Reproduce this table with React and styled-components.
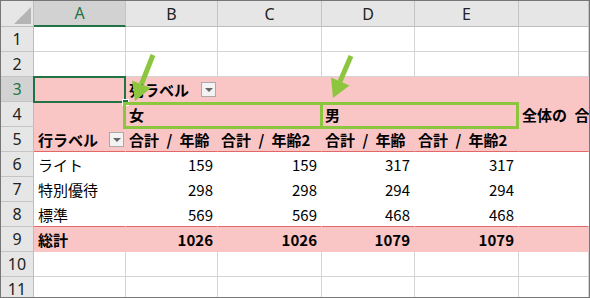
import React from 'react';
import styled, { createGlobalStyle } from 'styled-components';

const GlobalStyle = createGlobalStyle`
	html, body {
		margin: 0;
		padding: 0;
		background: #ffffff;
	}
`;

const PINK = '#f9c5c5';
const GRID = '#d4d4d4';
const XL_GREEN = '#217346';
const MARK = '#8cc63f';

const Frame = styled.div`
	position: relative;
	width: 590px;
	height: 298px;
	box-sizing: border-box;
	border: 1px solid #767676;
	overflow: hidden;
	background: #ffffff;
`;

const Sheet = styled.div`
	display: grid;
	grid-template-columns: 33px 92px 92px 104px 93px 104px 1fr;
	grid-template-rows: 26px repeat(11, 25px);
	font-family: 'Noto Sans CJK JP', 'Noto Sans', sans-serif;
	font-size: 15px;
	color: #000;
`;

const Corner = styled.div`
	position: relative;
	background: #e6e6e6;
	border-right: 1px solid #bdbdbd;
	border-bottom: 1px solid #bdbdbd;
	&::after {
		content: '';
		position: absolute;
		right: 2px;
		bottom: 2px;
		width: 0;
		height: 0;
		border-left: 17px solid transparent;
		border-bottom: 17px solid #b4b4b4;
	}
`;

const ColHead = styled.div`
	display: flex;
	align-items: center;
	justify-content: center;
	box-sizing: border-box;
	background: ${(p) => (p.$active ? '#d2d2d2' : '#e6e6e6')};
	color: ${(p) => (p.$active ? XL_GREEN : '#222')};
	border-right: 1px solid #c4c4c4;
	border-bottom: ${(p) => (p.$active ? `2px solid ${XL_GREEN}` : '1px solid #bdbdbd')};
	font-family: 'Noto Sans', sans-serif;
	font-size: 16px;
`;

const RowHead = styled.div`
	display: flex;
	align-items: center;
	justify-content: center;
	box-sizing: border-box;
	background: ${(p) => (p.$active ? '#d2d2d2' : '#e6e6e6')};
	color: ${(p) => (p.$active ? XL_GREEN : '#222')};
	border-right: 1px solid ${(p) => (p.$active ? XL_GREEN : '#bdbdbd')};
	border-bottom: 1px solid #c4c4c4;
	font-family: 'Noto Sans', sans-serif;
	font-size: 16px;
`;

const Cell = styled.div`
	display: flex;
	align-items: center;
	justify-content: ${(p) => (p.$right ? 'flex-end' : 'space-between')};
	box-sizing: border-box;
	padding: 0 ${(p) => (p.$right ? '4px' : '0')} 0 ${(p) => (p.$right ? '0' : p.$first ? '4px' : '3px')};
	background: ${(p) => (p.$pink ? PINK : '#ffffff')};
	border-right: 1px solid ${(p) => (p.$grid ? GRID : 'transparent')};
	border-bottom: 1px solid ${(p) => (p.$red ? '#e26868' : p.$grid ? GRID : 'transparent')};
	font-weight: ${(p) => (p.$bold ? 700 : 400)};
	word-spacing: 4px;
	white-space: nowrap;
	min-width: 0;
`;

const DropButton = styled.span`
	flex: none;
	display: flex;
	align-items: center;
	justify-content: center;
	width: 15px;
	height: 15px;
	margin-right: 1px;
	box-sizing: border-box;
	background: #f3f3f3;
	border: 1px solid #a9a9a9;
	&::after {
		content: '';
		width: 0;
		height: 0;
		margin-top: 2px;
		border-left: 4px solid transparent;
		border-right: 4px solid transparent;
		border-top: 4px solid #666;
	}
`;

// overlays: active cell outline and the annotation marks drawn over the sheet
const Selection = styled.div`
	position: absolute;
	left: 32px;
	top: 75px;
	width: 93px;
	height: 27px;
	box-sizing: border-box;
	border: 2px solid ${XL_GREEN};
	pointer-events: none;
	&::after {
		content: '';
		position: absolute;
		right: -5px;
		bottom: -5px;
		width: 5px;
		height: 5px;
		background: ${XL_GREEN};
		border: 1px solid #fff;
	}
`;

const MarkBox = styled.div`
	position: absolute;
	top: 101px;
	left: ${(p) => p.$left}px;
	width: ${(p) => p.$width}px;
	height: 27px;
	box-sizing: border-box;
	border: 3px solid ${MARK};
	pointer-events: none;
`;

const Arrows = styled.svg`
	position: absolute;
	left: -1px;
	top: -1px;
	pointer-events: none;
`;

const columns = ['A', 'B', 'C', 'D', 'E', ''];

const rows = [
	{ n: 1, grid: true },
	{ n: 2, grid: true },
	{
		n: 3,
		pink: true,
		cells: [null, { text: '列ラベル', bold: true, drop: true }],
	},
	{
		n: 4,
		pink: true,
		cells: [null, { text: '女', bold: true }, null, { text: '男', bold: true }, null, { text: '全体の 合計 / 年齢', bold: true }],
	},
	{
		n: 5,
		pink: true,
		red: true,
		cells: [
			{ text: '行ラベル', bold: true, drop: true },
			{ text: '合計 / 年齢', bold: true },
			{ text: '合計 / 年齢2', bold: true },
			{ text: '合計 / 年齢', bold: true },
			{ text: '合計 / 年齢2', bold: true },
		],
	},
	{ n: 6, cells: [{ text: 'ライト' }, ...[159, 159, 317, 317].map((v) => ({ text: v, right: true }))] },
	{ n: 7, cells: [{ text: '特別優待' }, ...[298, 298, 294, 294].map((v) => ({ text: v, right: true }))] },
	{ n: 8, red: true, cells: [{ text: '標準' }, ...[569, 569, 468, 468].map((v) => ({ text: v, right: true }))] },
	{
		n: 9,
		pink: true,
		cells: [{ text: '総計', bold: true }, ...[1026, 1026, 1079, 1079].map((v) => ({ text: v, right: true, bold: true }))],
	},
	{ n: 10, grid: true },
	{ n: 11, grid: true },
];

export default function App() {
	return (
		<>
			<GlobalStyle />
			<Frame>
				<Sheet>
					<Corner />
					{columns.map((c, i) => (
						<ColHead key={i} $active={c === 'A'}>
							{c}
						</ColHead>
					))}
					{rows.map((row) => (
						<React.Fragment key={row.n}>
							<RowHead $active={row.n === 3}>{row.n}</RowHead>
							{columns.map((c, i) => {
								const cell = (row.cells && row.cells[i]) || {};
								return (
									<Cell
										key={i}
										$first={i === 0}
										$pink={row.pink}
										$grid={row.grid}
										$red={row.red}
										$bold={cell.bold}
										$right={cell.right}
									>
										{cell.text}
										{cell.drop && <DropButton />}
									</Cell>
								);
							})}
						</React.Fragment>
					))}
				</Sheet>
				<Selection />
				<MarkBox $left={122} $width={200} />
				<MarkBox $left={319} $width={199} />
				<Arrows width="590" height="298" viewBox="0 0 590 298">
					<line x1="153" y1="55" x2="141.5" y2="84" stroke={MARK} strokeWidth="5" />
					<polygon points="135,101 132,80.5 151,88" fill={MARK} />
					<line x1="351" y1="56" x2="340" y2="81.5" stroke={MARK} strokeWidth="5" />
					<polygon points="333,98 331,77.5 349.5,85.5" fill={MARK} />
				</Arrows>
			</Frame>
		</>
	);
}
